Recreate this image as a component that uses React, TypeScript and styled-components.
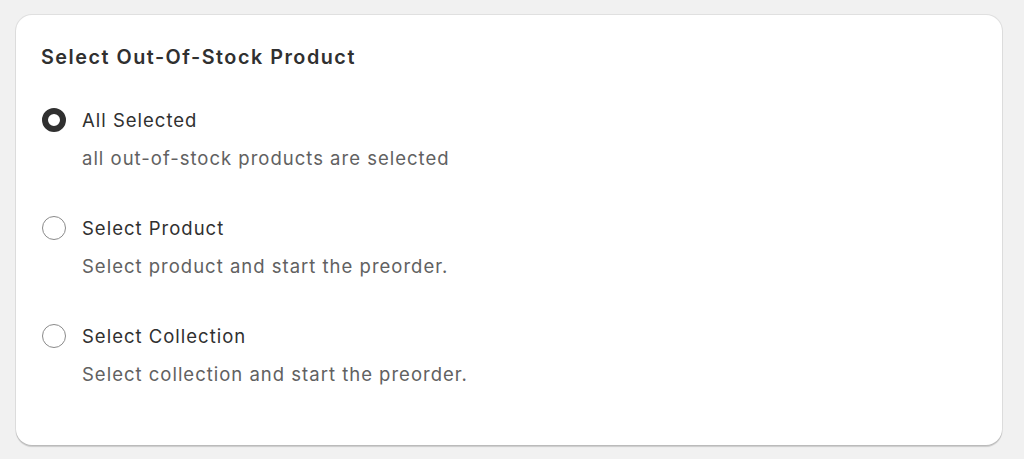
import styled, { createGlobalStyle } from 'styled-components';

const GlobalStyle = createGlobalStyle`
  body {
    margin: 0;
    background: #f1f1f1;
    font-family: Inter, "Noto Sans", sans-serif;
    -webkit-font-smoothing: antialiased;
  }
`;

const options = [
  { label: 'All Selected', help: 'all out-of-stock products are selected', checked: true },
  { label: 'Select Product', help: 'Select product and start the preorder.', checked: false },
  { label: 'Select Collection', help: 'Select collection and start the preorder.', checked: false },
];

const App = () => {
  return (
    <Page>
      <GlobalStyle />
      <Card>
        <Title>Select Out-Of-Stock Product</Title>
        <OptionList>
          {options.map(o => (
            <Option key={o.label}>
              <LabelRow>
                <Radio $checked={o.checked} />
                <Label>{o.label}</Label>
              </LabelRow>
              <Help>{o.help}</Help>
            </Option>
          ))}
        </OptionList>
      </Card>
    </Page>
  );
};

const Page = styled.div`
  padding: 15px 22px 14px 16px;
`;

const Card = styled.div`
  background: #fff;
  border-radius: 16px;
  padding: 29px 25px 58px 25px;
  box-shadow: 0 0 0 1px rgba(0, 0, 0, 0.07), 0 1.5px 1px rgba(0, 0, 0, 0.16);
`;

const Title = styled.h2`
  margin: 0;
  font-size: 19.8px;
  line-height: 26px;
  font-weight: 600;
  letter-spacing: 1.5px;
  color: #303030;
`;

const OptionList = styled.div`
  display: flex;
  flex-direction: column;
  gap: 44px;
  margin-top: 37px;
`;

const Option = styled.div`
  display: flex;
  flex-direction: column;
  gap: 12px;
`;

const LabelRow = styled.label`
  display: flex;
  align-items: center;
  gap: 16px;
`;

const Radio = styled.span<{ $checked: boolean }>`
  box-sizing: border-box;
  width: 24px;
  height: 24px;
  margin-left: 1px;
  border-radius: 50%;
  background: #fff;
  border: ${p => (p.$checked ? '6.5px solid #303030' : '1px solid #8a8a8a')};
  flex-shrink: 0;
`;

const Label = styled.span`
  font-size: 18.5px;
  line-height: 26px;
  letter-spacing: 1px;
  color: #303030;
`;

const Help = styled.div`
  padding-left: 41px;
  font-size: 18.5px;
  line-height: 26px;
  letter-spacing: 1px;
  color: #616161;
`;

export default App;
